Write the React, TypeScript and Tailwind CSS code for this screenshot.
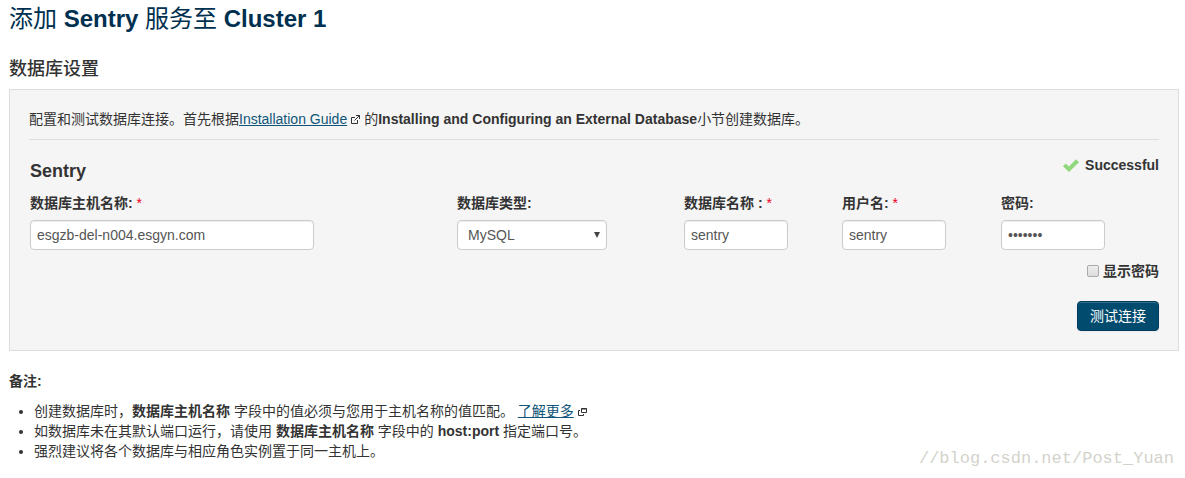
import { useState } from "react";
import type { ReactNode } from "react";

function Label({ htmlFor, required, children }: { htmlFor: string; required?: boolean; children: ReactNode }) {
  return (
    <label htmlFor={htmlFor} className="block h-5 font-bold whitespace-pre">
      {children}
      {required && <span className="font-normal text-[#ee0022]"> *</span>}
    </label>
  );
}

const control =
  "mt-[7px] block h-[30px] rounded border border-[#cccccc] bg-white px-1.5 text-sm text-[#555555] shadow-[inset_0_1px_1px_rgba(0,0,0,0.075)]";

function ExternalIcon() {
  return (
    <svg aria-hidden="true" viewBox="0 0 9 9" className="mx-1 inline-block size-[9px] align-baseline" fill="none" stroke="#333333">
      <path d="M4 2.5H.5v6h6V5" />
      <path d="M5 .5h3.5V4M8.5.5 3.5 5.5" />
    </svg>
  );
}

function WindowIcon() {
  return (
    <svg aria-hidden="true" viewBox="0 0 9 8" className="mx-1 inline-block h-2 w-[9px] align-baseline" fill="none" stroke="#333333">
      <path d="M3.5.5h5v4h-5zM3 1h6" />
      <path d="M2 2.5H.5v5h5V6" />
    </svg>
  );
}

export default function App() {
  const [showPassword, setShowPassword] = useState(false);
  return (
    <main className="px-[9px] pb-4 pr-1.5 pt-1 font-['Liberation_Sans','Noto_Sans_CJK_SC',sans-serif] text-sm leading-5 text-[#333333]">
      <h1 className="text-2xl leading-[30px] font-bold text-[#003050]">
        <span className="font-normal">添加</span> Sentry <span className="font-normal">服务至</span> Cluster 1
      </h1>
      <h2 className="mt-5 text-lg leading-[30px] font-medium">数据库设置</h2>

      <section className="mt-[5px] border border-[#dddddd] bg-[#f5f5f5] px-[19px] pt-[19px] pb-[19px]">
        <p className="border-b border-[#dddddd] pb-2.5">
          配置和测试数据库连接。首先根据
          <a href="#guide" className="text-[#0f5579] underline">Installation Guide</a>
          <ExternalIcon />的<strong>Installing and Configuring an External Database</strong>小节创建数据库。
        </p>

        <form onSubmit={(e) => e.preventDefault()} className="pl-px">
          <div className="flex justify-between pt-[15px]">
            <h3 className="pt-1.5 text-lg leading-5 font-bold">Sentry</h3>
            <div className="flex h-5 items-center gap-1.5 font-bold">
              <svg aria-hidden="true" viewBox="0 0 16 13" className="h-[13px] w-4">
                <path d="M0 7.2 2.7 4.5 6 7.4 13 .3 16 3.2 6 13z" fill="#8fd87c" />
              </svg>
              Successful
            </div>
          </div>

          <div className="mt-3 grid grid-cols-[427fr_227fr_158fr_159fr_158fr]">
            <div>
              <Label htmlFor="host" required>数据库主机名称:</Label>
              <input id="host" defaultValue="esgzb-del-n004.esgyn.com" className={`${control} w-[284px]`} />
            </div>
            <div>
              <Label htmlFor="type">数据库类型:</Label>
              <div className="relative w-[150px]">
                <select id="type" className={`${control} w-full appearance-none pl-2.5`}>
                  <option>MySQL</option>
                </select>
                <svg aria-hidden="true" viewBox="0 0 6 6" className="pointer-events-none absolute top-3 right-[7px] size-1.5">
                  <path d="M0 0h6L3 6z" fill="#444444" />
                </svg>
              </div>
            </div>
            <div>
              <Label htmlFor="name" required>数据库名称 :</Label>
              <input id="name" defaultValue="sentry" className={`${control} w-[104px]`} />
            </div>
            <div>
              <Label htmlFor="user" required>用户名:</Label>
              <input id="user" defaultValue="sentry" className={`${control} w-[104px]`} />
            </div>
            <div>
              <Label htmlFor="password">密码:</Label>
              <input
                id="password"
                type={showPassword ? "text" : "password"}
                defaultValue="sentry1"
                className={`${control} w-[104px]`}
              />
            </div>
          </div>

          <div className="mt-[11px] flex flex-col items-end gap-5">
            <label className="flex items-center gap-1 font-bold">
              <input
                type="checkbox"
                checked={showPassword}
                onChange={(e) => setShowPassword(e.target.checked)}
                className="size-3 appearance-none rounded-xs border border-[#aaaaaa] bg-linear-to-b from-[#eeeeee] to-[#dddddd] checked:bg-[#004b6e]"
              />
              显示密码
            </label>
            <button className="h-[30px] rounded border border-[#003d5c] bg-[#004b6e] px-[12px] text-white shadow-[inset_0_1px_0_rgba(255,255,255,0.2),0_1px_2px_rgba(0,0,0,0.05)]">
              测试连接
            </button>
          </div>
        </form>
      </section>

      <h4 className="mt-5 font-bold">备注:</h4>
      <ul className="mt-2.5 list-disc pl-[25px]">
        <li>
          创建数据库时，<strong>数据库主机名称</strong> 字段中的值必须与您用于主机名称的值匹配。{" "}
          <a href="#more" className="text-[#0f5579] underline">了解更多</a>
          <WindowIcon />
        </li>
        <li>
          如数据库未在其默认端口运行，请使用 <strong>数据库主机名称</strong> 字段中的 <strong>host:port</strong> 指定端口号。
        </li>
        <li>强烈建议将各个数据库与相应角色实例置于同一主机上。</li>
      </ul>
      <p className="-mt-3 pr-[5px] text-right font-['Liberation_Mono',monospace] text-[17px] leading-5 text-[#d3d3cb]">
        //blog.csdn.net/Post_Yuan
      </p>
    </main>
  );
}
